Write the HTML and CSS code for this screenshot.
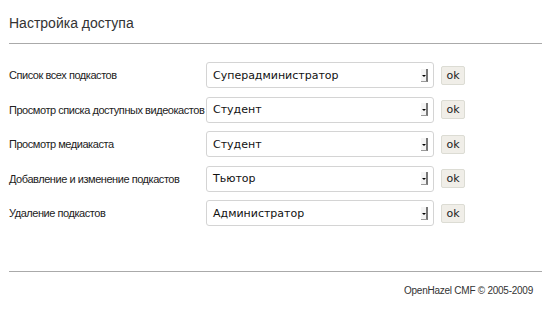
FILE: index.html
```html
<!DOCTYPE html>
<html lang="ru">
<head>
  <meta charset="UTF-8">
  <title>Настройка доступа</title>
  <link rel="stylesheet" href="styles.css">
</head>
<body>

  <div class="page">
    <h1 class="page-title">Настройка доступа</h1>

    <form class="access-form">
      <div class="access-row">
        <label class="access-label">Список всех подкастов</label>
        <div class="role-select"><span class="role-value">Суперадминистратор</span><span class="role-arrow"></span></div>
        <button type="button" class="ok-btn">ok</button>
      </div>
      <div class="access-row">
        <label class="access-label">Просмотр списка доступных видеокастов</label>
        <div class="role-select"><span class="role-value">Студент</span><span class="role-arrow"></span></div>
        <button type="button" class="ok-btn">ok</button>
      </div>
      <div class="access-row">
        <label class="access-label">Просмотр медиакаста</label>
        <div class="role-select"><span class="role-value">Студент</span><span class="role-arrow"></span></div>
        <button type="button" class="ok-btn">ok</button>
      </div>
      <div class="access-row">
        <label class="access-label">Добавление и изменение подкастов</label>
        <div class="role-select"><span class="role-value">Тьютор</span><span class="role-arrow"></span></div>
        <button type="button" class="ok-btn">ok</button>
      </div>
      <div class="access-row">
        <label class="access-label">Удаление подкастов</label>
        <div class="role-select"><span class="role-value">Администратор</span><span class="role-arrow"></span></div>
        <button type="button" class="ok-btn">ok</button>
      </div>
    </form>

    <div class="footer">
      <a class="footer-link" href="#">OpenHazel CMF</a> &copy; 2005-2009
    </div>
  </div>

</body>
</html>
```

FILE: styles.css
```css
body {
  margin: 0;
  padding: 0;
  background-color: #fff;
  font-family: "Liberation Sans", Arial, sans-serif;
  color: #222;
}

.page {
  padding-left: 9px;
}

.page-title {
  margin: 0;
  padding-top: 15px;
  padding-bottom: 11px;
  font-size: 14px;
  font-weight: normal;
  line-height: 17px;
  color: #333;
  border-bottom: 1px solid #aaa;
}

.access-form {
  padding-top: 18px;
  padding-bottom: 36px;
  border-bottom: 1px solid #aaa;
}

.access-row {
  display: flex;
  align-items: center;
  height: 26px;
  margin-bottom: 8.5px;
}

.access-label {
  flex-shrink: 0;
  width: 197px;
  font-size: 11px;
  letter-spacing: -0.45px;
  white-space: nowrap;
}

.role-select {
  display: flex;
  flex-shrink: 0;
  align-items: center;
  box-sizing: border-box;
  width: 228px;
  height: 26px;
  padding: 0 5px 0 6px;
  border: 1px solid #d4d4d4;
  border-radius: 3px;
}

.role-value {
  flex: 1;
  font-family: "DejaVu Sans", Verdana, sans-serif;
  font-size: 11px;
  color: #111;
}

.role-arrow {
  position: relative;
  box-sizing: border-box;
  width: 7px;
  height: 13px;
  background-color: #f4f4f4;
  border-right: 2px solid #777;
  border-bottom: 1px solid #999;
}

.role-arrow::after {
  content: "";
  position: absolute;
  left: 1px;
  top: 6px;
  border-left: 2px solid transparent;
  border-right: 2px solid transparent;
  border-top: 2px solid #000;
}

.ok-btn {
  box-sizing: border-box;
  width: 24px;
  height: 19px;
  margin-left: 7px;
  padding: 0;
  font-family: "DejaVu Sans", Verdana, sans-serif;
  font-size: 11px;
  color: #222;
  background-color: #f0eee8;
  border: 1px solid #dcdcd4;
  border-radius: 2px;
}

.footer {
  padding: 13px 9px 0 0;
  text-align: right;
  font-size: 10px;
  letter-spacing: -0.25px;
  color: #333;
}

.footer-link {
  color: #333;
  text-decoration: none;
  border-bottom: 1px dotted #333;
}
```
